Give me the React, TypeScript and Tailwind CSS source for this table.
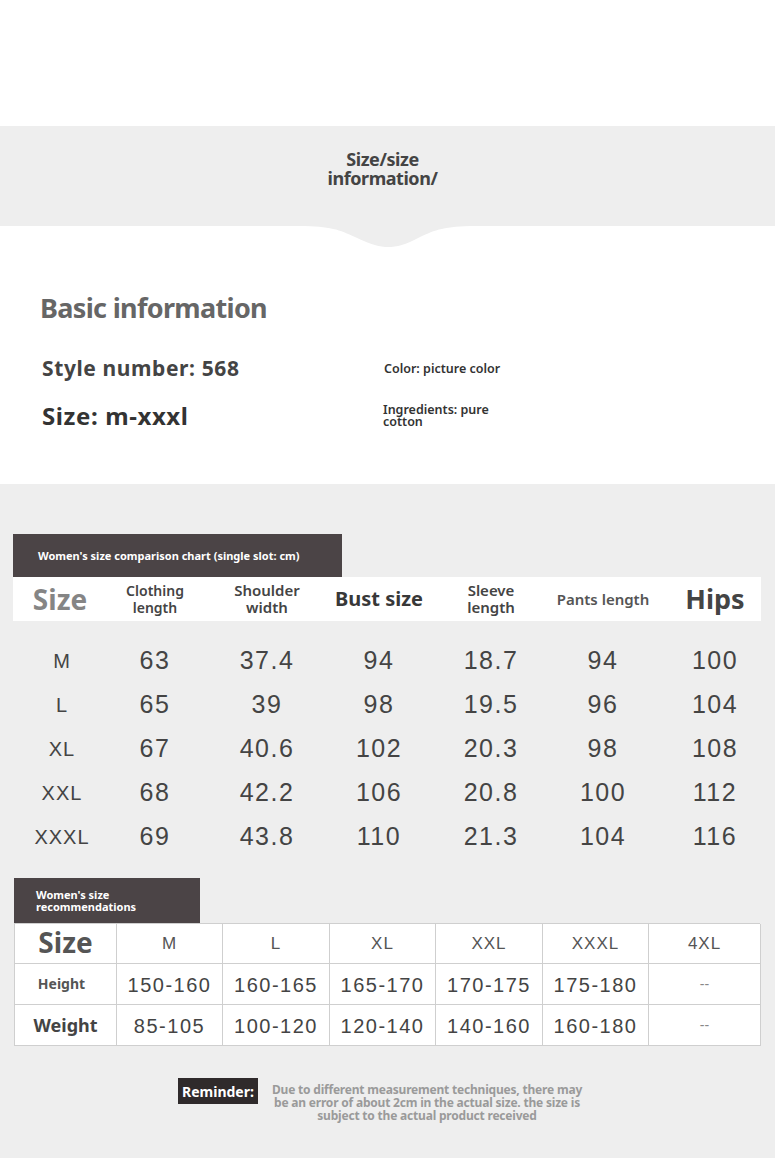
const chartCols = ["Size", "Clothing length", "Shoulder width", "Bust size", "Sleeve length", "Pants length", "Hips"];

const chartRows = [
  ["M", "63", "37.4", "94", "18.7", "94", "100"],
  ["L", "65", "39", "98", "19.5", "96", "104"],
  ["XL", "67", "40.6", "102", "20.3", "98", "108"],
  ["XXL", "68", "42.2", "106", "20.8", "100", "112"],
  ["XXXL", "69", "43.8", "110", "21.3", "104", "116"],
];

const recSizes = ["M", "L", "XL", "XXL", "XXXL", "4XL"];
const recRows = [
  { label: "Height", big: false, values: ["150-160", "160-165", "165-170", "170-175", "175-180", "--"] },
  { label: "Weight", big: true, values: ["85-105", "100-120", "120-140", "140-160", "160-180", "--"] },
];

const grid7 = "grid grid-cols-[86px_repeat(6,112px)]";
const recGrid = "grid grid-cols-[102px_106px_107px_106px_107px_106px_112px]";

function Tab({ children, className }: { children: React.ReactNode; className: string }) {
  return (
    <div className={`bg-[#4b4446] text-[11px] font-bold leading-[12px] text-white ${className}`}>{children}</div>
  );
}

function HeaderCell({ name }: { name: string }) {
  if (name === "Size")
    return <span className="pl-[8px] text-[28px] font-bold text-[#858585]">Size</span>;
  if (name === "Hips") return <span className="text-[27px] font-bold text-[#444]">Hips</span>;
  if (name === "Bust size") return <span className="text-[20px] font-bold text-[#383838]">Bust size</span>;
  if (name === "Pants length") return <span className="text-[15px] font-semibold text-[#555]">Pants length</span>;
  const [a, b] = name.split(" ");
  return (
    <span className={`flex flex-col items-center font-semibold leading-[17px] text-[#444] ${name === "Clothing length" ? "text-[14px]" : "text-[15px]"}`}>
      <span>{a}</span>
      <span>{b}</span>
    </span>
  );
}

export default function App() {
  return (
    <div className="w-[775px] bg-white font-['Noto_Sans',sans-serif]">
      <div className="h-[126px]" />

      <div className="relative flex h-[100px] items-center justify-center bg-[#eeeeee]">
        <h2 className="-mt-[15px] ml-[-10px] text-center text-[18px] font-bold leading-[19px] tracking-tight text-[#444]">
          Size/size
          <br />
          information/
        </h2>
        <svg className="absolute left-[300px] top-full" width="175" height="22" viewBox="0 0 175 22">
          <path d="M0 0 C30 0 40 4 55 11 C72 19 80 21 88 21 C97 21 105 19 120 11 C135 4 145 0 175 0 Z" fill="#eeeeee" />
        </svg>
      </div>

      <section className="h-[258px] px-[40px] pt-[66px]">
        <h3 className="text-[27px] font-bold leading-[32px] tracking-tight text-[#666]">Basic information</h3>
        <div className="mt-[30px] grid grid-cols-[341px_140px] gap-y-[20px] pl-[2px]">
          <p className="text-[21px] font-bold leading-[28px] tracking-[0.6px] text-[#444]">Style number: 568</p>
          <p className="self-center pl-[1px] pt-[1px] text-[12.5px] font-semibold leading-[12px] text-[#333]">
            Color: picture color
          </p>
          <p className="text-[24px] font-bold leading-[28px] tracking-[0.6px] text-[#333]">Size: m-xxxl</p>
          <p className="w-[118px] self-center text-[12.5px] font-semibold leading-[12px] text-[#333]">
            Ingredients: pure cotton
          </p>
        </div>
      </section>

      <section className="h-[674px] bg-[#eeeeee] pt-[50px]">
        <Tab className="ml-[13px] flex h-[43px] w-[329px] items-center pl-[25px]">
          Women's size comparison chart (single slot: cm)
        </Tab>
        <div className="ml-[13px] w-[748px] bg-white">
          <div className={`${grid7} h-[44px] items-center`}>
            {chartCols.map((c) => (
              <div key={c} className="flex justify-center">
                <HeaderCell name={c} />
              </div>
            ))}
          </div>
        </div>

        <div className="ml-[13px] mt-[18px] font-['Liberation_Sans',sans-serif] text-[#444]">
          {chartRows.map((row) => (
            <div key={row[0]} className={`${grid7} h-[44px] items-center`}>
              {row.map((v, i) => (
                <div
                  key={i}
                  className={
                    i === 0
                      ? "pl-[12px] text-center text-[20px] tracking-[1px]"
                      : "text-center text-[25px] tracking-[1.5px]"
                  }
                >
                  {v}
                </div>
              ))}
            </div>
          ))}
        </div>

        <Tab className="ml-[14px] mt-[19px] flex h-[45px] w-[186px] flex-col justify-center pl-[22px]">
          <span>Women's size</span>
          <span>recommendations</span>
        </Tab>
        <div className="ml-[14px] w-[746px] border-l border-t border-[#cfcfcf] bg-white text-[#555]">
          <div className={`${recGrid} h-[40px]`}>
            <div className="flex items-center justify-center border-b border-r border-[#cfcfcf] pb-[3px] text-[28px] font-bold leading-none">
              Size
            </div>
            {recSizes.map((s) => (
              <div
                key={s}
                className="flex items-center justify-center border-b border-r border-[#cfcfcf] font-['Liberation_Sans',sans-serif] text-[17px] leading-none tracking-[1px]"
              >
                {s}
              </div>
            ))}
          </div>
          {recRows.map((r) => (
            <div key={r.label} className={`${recGrid} h-[41px]`}>
              <div
                className={`flex items-center justify-center border-b border-r border-[#cfcfcf] font-bold leading-none ${
                  r.big ? "text-[18px] text-[#444]" : "pr-[8px] text-[14px]"
                }`}
              >
                {r.label}
              </div>
              {r.values.map((v, i) => (
                <div
                  key={i}
                  className={`flex items-center justify-center border-b border-r border-[#cfcfcf] font-['Liberation_Sans',sans-serif] leading-none ${
                    v === "--" ? "text-[14px] text-[#888]" : "pt-[2px] text-[20px] tracking-[1.5px] text-[#444]"
                  }`}
                >
                  {v}
                </div>
              ))}
            </div>
          ))}
        </div>

        <div className="mt-[32px] flex pl-[178px]">
          <div className="flex h-[26px] w-[80px] items-center justify-center bg-[#2f2a2b] text-[14px] font-bold text-white">
            Reminder:
          </div>
          <p className="ml-[13px] mt-[5px] w-[312px] text-center text-[12px] font-bold leading-[13px] tracking-[-0.2px] text-[#9a9a9a]">
            Due to different measurement techniques, there may be an error of about 2cm in the actual size. the size is
            subject to the actual product received
          </p>
        </div>
      </section>

      <div className="h-[16px]" />
    </div>
  );
}
